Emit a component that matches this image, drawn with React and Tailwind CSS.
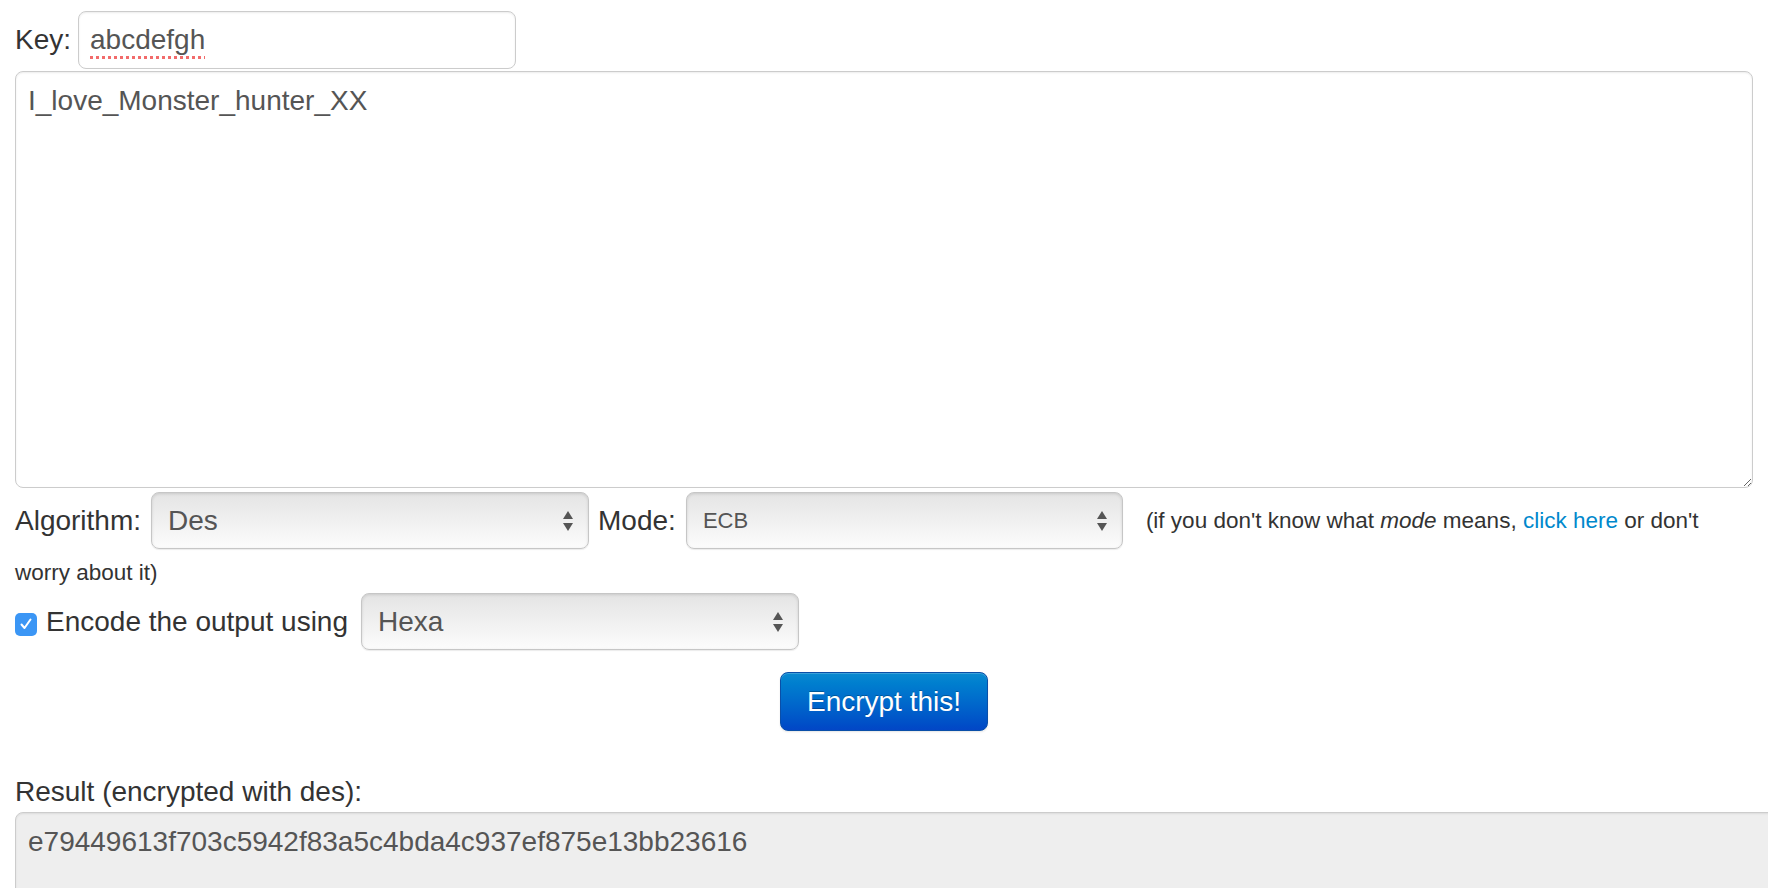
import React from "react";

const Arrows = () => (
  <svg width="12" height="24" viewBox="0 0 12 24" className="shrink-0">
    <path d="M6 2 L11 10 L1 10 Z" fill="#555" />
    <path d="M6 22 L11 14 L1 14 Z" fill="#555" />
  </svg>
);

const FakeSelect = ({ value, width, small }) => (
  <div
    className={`flex items-center justify-between h-[57px] ${width} rounded-[8px] border border-[#c6c6c6] bg-linear-to-b from-[#e4e4e4] to-[#fcfcfc] shadow-[inset_0_1px_3px_rgba(0,0,0,0.12),0_1px_1px_rgba(0,0,0,0.08)] pl-[16px] pr-[14px] text-[#555] shrink-0`}
  >
    <span className={small ? "text-[22px]" : "text-[28px]"}>{value}</span>
    <Arrows />
  </div>
);

export default function App() {
  return (
    <div className="w-full h-[888px] overflow-hidden bg-white text-[#333] font-['Liberation_Sans',Arial,sans-serif]">
      <div className="px-[15px] pt-[11px]">
        {/* KEY */}
        <div className="flex items-center gap-[7px]">
          <span className="text-[28px]">Key:</span>
          <div className="flex items-center w-[438px] h-[58px] rounded-[8px] border border-[#ccc] px-[11px] text-[28px] text-[#555] shadow-[inset_0_1px_2px_rgba(0,0,0,0.08)]">
            <span className="underline decoration-dotted decoration-[#f26b6b] decoration-[3px] underline-offset-[7px]">
              abcdefgh
            </span>
          </div>
        </div>

        {/* TEXT */}
        <textarea
          readOnly
          defaultValue="I_love_Monster_hunter_XX"
          className="mt-[2px] block w-full h-[417px] rounded-[8px] border border-[#ccc] px-[12px] pt-[9px] text-[28px] leading-[40px] text-[#555] outline-none shadow-[inset_0_1px_2px_rgba(0,0,0,0.08)] font-['Liberation_Sans',Arial,sans-serif]"
        />

        {/* ALGO / MODE */}
        <div className="mt-[4px] flex items-center">
          <span className="text-[28px] mr-[10px]">Algorithm:</span>
          <FakeSelect value="Des" width="w-[438px]" />
          <span className="text-[28px] ml-[9px] mr-[10px]">Mode:</span>
          <FakeSelect value="ECB" width="w-[437px]" small />
          <span className="ml-[23px] text-[22.5px] whitespace-nowrap">
            (if you don't know what <em>mode</em> means,{" "}
            <a href="#" className="text-[#0088cc]">
              click here
            </a>{" "}
            or don't
          </span>
        </div>
        <div className="mt-[4px] text-[22.5px] leading-[40px]">worry about it)</div>

        {/* ENCODE */}
        <div className="flex items-center">
          <div className="mt-[5px] w-[22px] h-[23px] rounded-[5px] bg-[#3b96f5] flex items-center justify-center shrink-0">
            <svg width="14" height="14" viewBox="0 0 14 14">
              <path d="M2.5 7.5 L5.5 11 L11.5 2.5" fill="none" stroke="#fff" strokeWidth="2" strokeLinecap="round" strokeLinejoin="round" />
            </svg>
          </div>
          <span className="ml-[9px] mr-[13px] text-[28px]">Encode the output using</span>
          <FakeSelect value="Hexa" width="w-[438px]" />
        </div>

        {/* BUTTON */}
        <div className="mt-[22px] flex justify-center">
          <button className="w-[208px] h-[59px] rounded-[8px] border border-[#0a4fa8] bg-linear-to-b from-[#0a8ad0] to-[#0346c6] text-white text-[28px] shadow-[inset_0_1px_0_rgba(255,255,255,0.2),0_1px_2px_rgba(0,0,0,0.1)] [text-shadow:0_-1px_0_rgba(0,0,0,0.25)]">
            Encrypt this!
          </button>
        </div>

        {/* RESULT */}
        <div className="mt-[41px] text-[28px] leading-[40px]">Result (encrypted with des):</div>
        <div className="w-[1800px] h-[110px] rounded-tl-[8px] border border-[#ccc] bg-[#eee] px-[12px] pt-[9px] text-[28px] leading-[40px] text-[#555] shadow-[inset_0_1px_2px_rgba(0,0,0,0.08)]">
          e79449613f703c5942f83a5c4bda4c937ef875e13bb23616
        </div>
      </div>
    </div>
  );
}
